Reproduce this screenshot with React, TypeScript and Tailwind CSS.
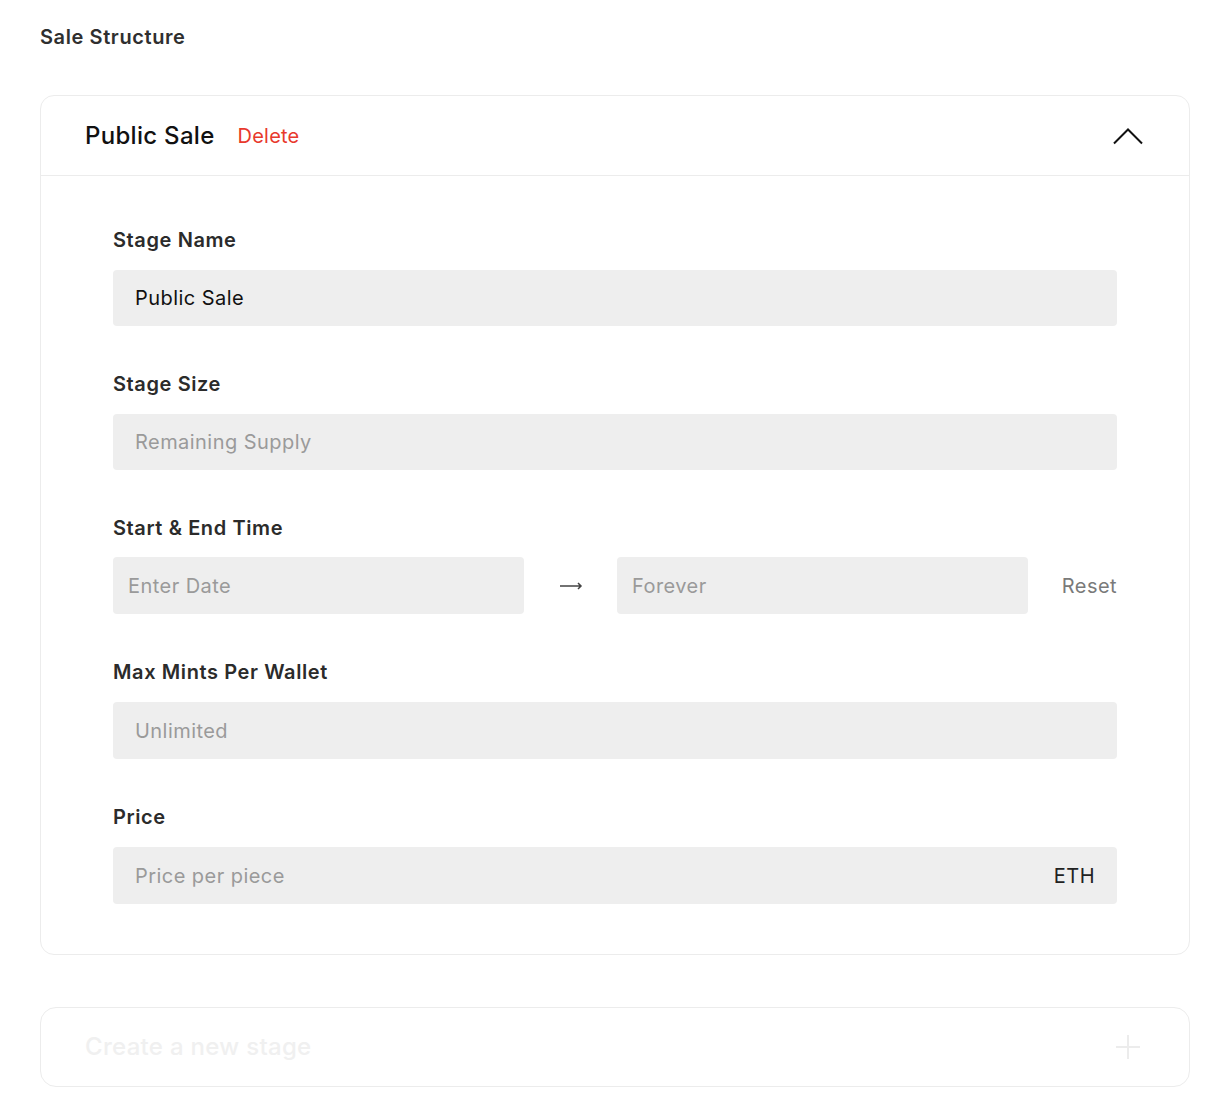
import React from "react";

const font = { fontFamily: "Inter, 'Noto Sans', sans-serif" };

function Label({ children }: { children: React.ReactNode }) {
  return (
    <div className="text-[20px] leading-[24px] font-semibold tracking-[0.6px] text-[#2b2b2b] mb-[18px]">{children}</div>
  );
}

function Field({ children, className = "" }: { children: React.ReactNode; className?: string }) {
  return (
    <div className={`bg-[#eeeeee] rounded-[4px] flex items-center text-[20px] tracking-[0.45px] ${className}`}>
      {children}
    </div>
  );
}

export default function App() {
  return (
    <div style={font} className="bg-white min-h-[1114px] px-[40px] pt-[24px]">
      <div className="text-[20px] leading-[26px] font-semibold tracking-[0.6px] text-[#2f2f2f]">Sale Structure</div>

      <div className="mt-[45px] border border-[#ececec] rounded-[14px]">
        <div className="h-[80px] border-b border-[#ececec] flex items-center pl-[44px] pr-[46px]">
          <span className="text-[24px] font-medium tracking-[0.3px] text-[#111]">Public Sale</span>
          <span className="ml-[23px] text-[20px] tracking-[0.2px] text-[#e8392c]">Delete</span>
          <svg className="ml-auto" width="30" height="18" viewBox="0 0 30 18" fill="none">
            <path d="M1 16.5 L15 2.5 L29 16.5" stroke="#111" strokeWidth="2" />
          </svg>
        </div>

        <div className="px-[72px] pt-[52px] pb-[50px] flex flex-col gap-[46px]">
          <div>
            <Label>Stage Name</Label>
            <Field className="h-[56px] px-[22px] text-[#111]">Public Sale</Field>
          </div>
          <div>
            <Label>Stage Size</Label>
            <Field className="h-[56px] px-[22px] text-[#9a9a9a]">Remaining Supply</Field>
          </div>
          <div>
            <div className="text-[20px] leading-[24px] font-semibold tracking-[0.6px] text-[#2b2b2b] mb-[17px]">
              Start &amp; End Time
            </div>
            <div className="flex items-center">
              <Field className="h-[57px] w-[411px] px-[15px] text-[#9a9a9a]">Enter Date</Field>
              <div className="w-[93px] flex justify-center">
                <svg width="24" height="10" viewBox="0 0 24 10" fill="none">
                  <path d="M1 5 H22 M19 2 L22 5 L19 8" stroke="#444" strokeWidth="1.5" />
                </svg>
              </div>
              <Field className="h-[57px] w-[411px] px-[15px] text-[#9a9a9a]">Forever</Field>
              <div className="ml-auto text-[20px] tracking-[0.45px] text-[#7a7a7a]">Reset</div>
            </div>
          </div>
          <div>
            <Label>Max Mints Per Wallet</Label>
            <Field className="h-[57px] px-[22px] text-[#9a9a9a]">Unlimited</Field>
          </div>
          <div>
            <Label>Price</Label>
            <Field className="h-[57px] px-[22px] text-[#9a9a9a] justify-between">
              <span>Price per piece</span>
              <span className="text-[#222]">ETH</span>
            </Field>
          </div>
        </div>
      </div>

      <div className="mt-[52px] h-[80px] border border-[#ececec] rounded-[16px] flex items-center pl-[44px] pr-[48px]">
        <span className="text-[24px] font-medium tracking-[0.3px] text-[#f0f0f0]">Create a new stage</span>
        <svg className="ml-auto" width="26" height="26" viewBox="0 0 26 26" fill="none">
          <path d="M13 1 V25 M1 13 H25" stroke="#ececec" strokeWidth="2" />
        </svg>
      </div>
    </div>
  );
}
